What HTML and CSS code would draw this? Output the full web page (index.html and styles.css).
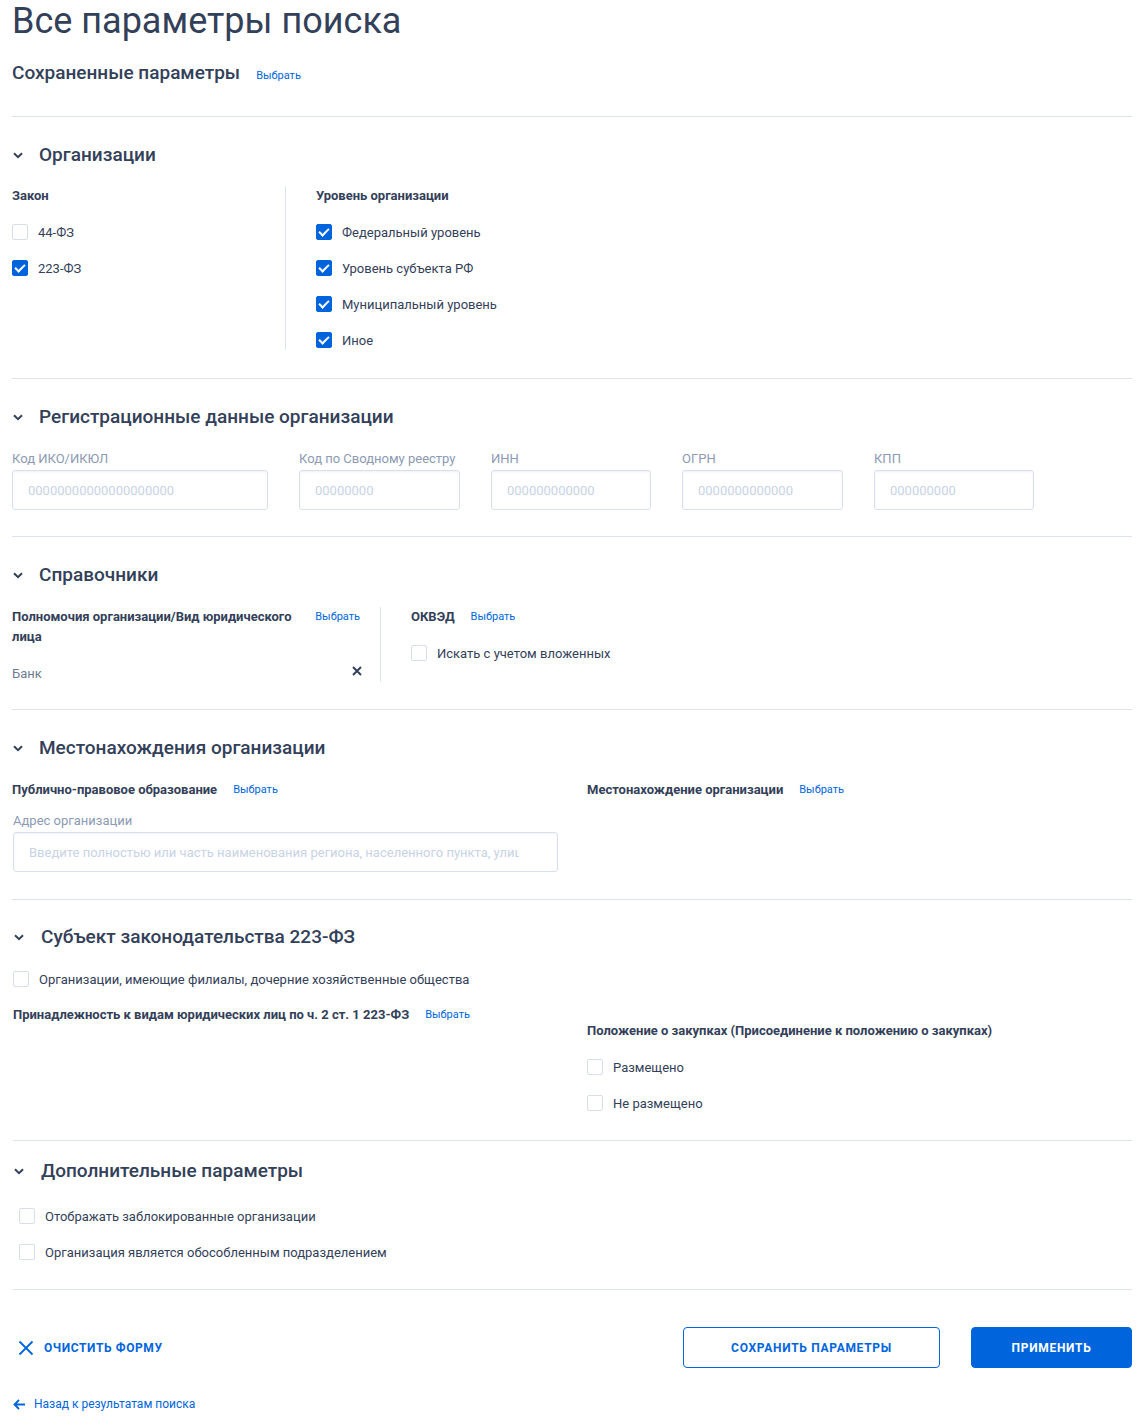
FILE: index.html
```html
<!DOCTYPE html>
<html lang="ru">
<head>
    <meta charset="UTF-8">
    <meta name="viewport" content="width=device-width, initial-scale=1.0">
    <title>Все параметры поиска</title>
    <link rel="stylesheet" href="styles.css">
</head>
<body>
<main class="page">
    <h1 class="page-title">Все параметры поиска</h1>

    <div class="saved">
        <span class="saved-title">Сохраненные параметры</span>
        <a class="link" href="#">Выбрать</a>
    </div>

    <!-- Организации -->
    <section class="block block-org">
        <h2 class="block-head">
            <svg class="chevron" width="10" height="7" viewBox="0 0 10 7"><polyline points="1,1.2 5,5.2 9,1.2"/></svg>
            Организации
        </h2>
        <div class="cols">
            <div class="col col-law">
                <div class="field-label">Закон</div>
                <label class="check"><span class="box"></span>44-ФЗ</label>
                <label class="check"><span class="box checked"></span>223-ФЗ</label>
            </div>
            <div class="col col-right">
                <div class="field-label">Уровень организации</div>
                <label class="check"><span class="box checked"></span>Федеральный уровень</label>
                <label class="check"><span class="box checked"></span>Уровень субъекта РФ</label>
                <label class="check"><span class="box checked"></span>Муниципальный уровень</label>
                <label class="check"><span class="box checked"></span>Иное</label>
            </div>
        </div>
    </section>

    <!-- Регистрационные данные -->
    <section class="block">
        <h2 class="block-head">
            <svg class="chevron" width="10" height="7" viewBox="0 0 10 7"><polyline points="1,1.2 5,5.2 9,1.2"/></svg>
            Регистрационные данные организации
        </h2>
        <div class="inputs">
            <div class="input-group w256">
                <div class="input-label">Код ИКО/ИКЮЛ</div>
                <input class="text-input" type="text" placeholder="00000000000000000000">
            </div>
            <div class="input-group w161">
                <div class="input-label">Код по Сводному реестру</div>
                <input class="text-input" type="text" placeholder="00000000">
            </div>
            <div class="input-group w160">
                <div class="input-label">ИНН</div>
                <input class="text-input" type="text" placeholder="000000000000">
            </div>
            <div class="input-group w161">
                <div class="input-label">ОГРН</div>
                <input class="text-input" type="text" placeholder="0000000000000">
            </div>
            <div class="input-group w160">
                <div class="input-label">КПП</div>
                <input class="text-input" type="text" placeholder="000000000">
            </div>
        </div>
    </section>

    <!-- Справочники -->
    <section class="block">
        <h2 class="block-head">
            <svg class="chevron" width="10" height="7" viewBox="0 0 10 7"><polyline points="1,1.2 5,5.2 9,1.2"/></svg>
            Справочники
        </h2>
        <div class="cols">
            <div class="col col-powers">
                <div class="label-row">
                    <span class="field-label grow">Полномочия организации/Вид юридического лица</span>
                    <a class="link" href="#">Выбрать</a>
                </div>
                <div class="chosen">
                    <span>Банк</span>
                    <svg class="remove" width="10" height="10" viewBox="0 0 10 10"><path d="M1 1 L9 9 M9 1 L1 9"/></svg>
                </div>
            </div>
            <div class="col col-right">
                <div class="label-row">
                    <span class="field-label">ОКВЭД</span>
                    <a class="link" href="#">Выбрать</a>
                </div>
                <label class="check"><span class="box"></span>Искать с учетом вложенных</label>
            </div>
        </div>
    </section>

    <!-- Местонахождения -->
    <section class="block">
        <h2 class="block-head">
            <svg class="chevron" width="10" height="7" viewBox="0 0 10 7"><polyline points="1,1.2 5,5.2 9,1.2"/></svg>
            Местонахождения организации
        </h2>
        <div class="halves">
            <div>
                <div class="label-row">
                    <span class="field-label">Публично-правовое образование</span>
                    <a class="link" href="#">Выбрать</a>
                </div>
                <div class="input-group address">
                    <div class="input-label">Адрес организации</div>
                    <input class="text-input" type="text" placeholder="Введите полностью или часть наименования региона, населенного пункта, улицы">
                </div>
            </div>
            <div>
                <div class="label-row">
                    <span class="field-label">Местонахождение организации</span>
                    <a class="link" href="#">Выбрать</a>
                </div>
            </div>
        </div>
    </section>

    <!-- Субъект 223-ФЗ -->
    <section class="block block-shift">
        <h2 class="block-head">
            <svg class="chevron" width="10" height="7" viewBox="0 0 10 7"><polyline points="1,1.2 5,5.2 9,1.2"/></svg>
            Субъект законодательства 223-ФЗ
        </h2>
        <label class="check check-first"><span class="box"></span>Организации, имеющие филиалы, дочерние хозяйственные общества</label>
        <div class="halves">
            <div>
                <div class="label-row">
                    <span class="field-label">Принадлежность к видам юридических лиц по ч. 2 ст. 1 223-ФЗ</span>
                    <a class="link" href="#">Выбрать</a>
                </div>
            </div>
            <div class="regulation">
                <div class="field-label">Положение о закупках (Присоединение к положению о закупках)</div>
                <label class="check"><span class="box"></span>Размещено</label>
                <label class="check"><span class="box"></span>Не размещено</label>
            </div>
        </div>
    </section>

    <!-- Дополнительные параметры -->
    <section class="block block-shift block-extra">
        <h2 class="block-head">
            <svg class="chevron" width="10" height="7" viewBox="0 0 10 7"><polyline points="1,1.2 5,5.2 9,1.2"/></svg>
            Дополнительные параметры
        </h2>
        <div class="extra-list">
            <label class="check"><span class="box"></span>Отображать заблокированные организации</label>
            <label class="check"><span class="box"></span>Организация является обособленным подразделением</label>
        </div>
    </section>

    <div class="actions">
        <button class="btn-clear" type="button">
            <svg width="16" height="16" viewBox="0 0 16 16"><path d="M1.5 1.5 L14.5 14.5 M14.5 1.5 L1.5 14.5"/></svg>
            Очистить форму
        </button>
        <div class="actions-right">
            <button class="btn btn-outline" type="button">Сохранить параметры</button>
            <button class="btn btn-primary" type="button">Применить</button>
        </div>
    </div>

    <a class="back" href="#">
        <svg width="13" height="11" viewBox="0 0 13 11"><path d="M12 5.5 H2 M6 1 L1.5 5.5 L6 10"/></svg>
        Назад к результатам поиска
    </a>
</main>
</body>
</html>
```

FILE: styles.css
```css
body {
    margin: 0;
    font-family: Roboto, "Liberation Sans", Arial, sans-serif;
    color: #334059;
    background: #fff;
}

.page {
    width: 1120px;
    padding: 0 13px 0 12px;
}

.page-title {
    margin: 0;
    font-size: 36px;
    font-weight: 400;
    line-height: 42px;
    color: #334059;
}

.saved {
    display: flex;
    align-items: baseline;
    margin-top: 19px;
    padding-bottom: 30px;
    border-bottom: 1px solid #dce3ee;
}

.saved-title {
    font-size: 19px;
    font-weight: 500;
    line-height: 24px;
}

.link {
    font-size: 11px;
    line-height: 20px;
    color: #0065dd;
    text-decoration: none;
    margin-left: 16px;
    flex: none;
}

/* sections */
.block {
    padding: 24px 0 27px;
    border-bottom: 1px solid #dce3ee;
}

.block-head {
    display: flex;
    align-items: center;
    margin: 0;
    font-size: 19px;
    font-weight: 500;
    line-height: 28px;
    color: #334059;
}

.chevron {
    margin: 1px 16px 0 1px;
}

.chevron polyline {
    fill: none;
    stroke: #334059;
    stroke-width: 2;
}

.field-label {
    font-size: 13px;
    font-weight: 700;
    line-height: 20px;
    color: #334059;
}

.cols {
    display: flex;
    margin-top: 18px;
}

.block-org {
    padding-bottom: 28px;
}

.block-org .cols {
    margin-top: 17px;
}

.col-law {
    width: 273px;
    border-right: 1px solid #dce3ee;
}

.col-right {
    padding-left: 30px;
}

.check {
    display: flex;
    align-items: center;
    height: 20px;
    margin-top: 16px;
    font-size: 13px;
    color: #334059;
}

.box {
    width: 14px;
    height: 14px;
    border: 1px solid #d6deea;
    border-radius: 2px;
    margin-right: 10px;
    flex: none;
    position: relative;
}

.box.checked {
    background: #0065dd;
    border-color: #0065dd;
}

.box.checked::after {
    content: "";
    position: absolute;
    left: 4px;
    top: 1px;
    width: 4px;
    height: 8px;
    border: solid #fff;
    border-width: 0 2px 2px 0;
    transform: rotate(45deg);
}

/* inputs */
.inputs {
    display: flex;
    gap: 31px;
    margin-top: 19px;
}

.block:has(.inputs) {
    padding-bottom: 26px;
}

.w256 {
    width: 256px;
}

.w161 {
    width: 161px;
}

.w160 {
    width: 160px;
}

.input-label {
    font-size: 13px;
    line-height: 18px;
    color: #8c9ab4;
    margin-bottom: 2px;
    white-space: nowrap;
}

.text-input {
    box-sizing: border-box;
    width: 100%;
    height: 40px;
    padding: 0 15px;
    border: 1px solid #d7e0ec;
    border-radius: 3px;
    box-shadow: inset 0 1px 2px rgba(120, 140, 180, 0.12);
    font-family: inherit;
    font-size: 13px;
    color: #334059;
}

.text-input::placeholder {
    color: #c8d3e4;
}

/* dictionaries */
.label-row {
    display: flex;
    align-items: flex-start;
}

.grow {
    flex: 1;
}

.col-powers {
    width: 351px;
    padding-right: 17px;
    border-right: 1px solid #dce3ee;
}

.col-powers .link {
    margin-left: 12px;
    margin-right: 3px;
}

.chosen {
    display: flex;
    justify-content: space-between;
    align-items: center;
    height: 18px;
    margin-top: 17px;
    font-size: 13px;
    color: #6e7b92;
}

.remove {
    margin-right: 1px;
    margin-top: -5px;
}

.remove path {
    stroke: #334059;
    stroke-width: 2;
}

/* location */
.halves {
    display: grid;
    grid-template-columns: 545px 545px;
    column-gap: 30px;
    margin-top: 18px;
}

.input-group.address {
    width: 545px;
    margin-top: 12px;
    padding-left: 1px;
}

.address .text-input {
    padding-right: 38px;
    text-overflow: clip;
}

/* subject 223 */
.block-shift {
    padding-top: 23px;
    margin-left: 1px;
}

.block-shift .chevron {
    margin-right: 17px;
}

.check-first {
    margin-top: 18px;
}

.block-shift .halves {
    margin-top: 16px;
    grid-template-columns: 544px 545px;
}

.regulation {
    padding-top: 16px;
}

.block-extra {
    padding-top: 16px;
}

.extra-list {
    padding: 5px 0 0 6px;
}

/* footer */
.actions {
    display: flex;
    justify-content: space-between;
    align-items: center;
    margin-top: 37px;
}

.btn-clear {
    display: flex;
    align-items: center;
    padding: 0 0 0 6px;
    border: none;
    background: none;
    font-family: inherit;
    font-size: 12px;
    font-weight: 700;
    text-transform: uppercase;
    letter-spacing: 0.6px;
    color: #0065dd;
    cursor: pointer;
}

.btn-clear svg {
    margin-right: 10px;
}

.btn-clear path {
    stroke: #0065dd;
    stroke-width: 1.8;
}

.actions-right {
    display: flex;
    gap: 31px;
}

.btn {
    height: 41px;
    border-radius: 4px;
    font-family: inherit;
    font-size: 12px;
    font-weight: 700;
    text-transform: uppercase;
    letter-spacing: 0.7px;
    cursor: pointer;
}

.btn-outline {
    width: 257px;
    background: #fff;
    border: 1px solid #0065dd;
    color: #0065dd;
}

.btn-primary {
    width: 161px;
    background: #0065dd;
    border: 1px solid #0065dd;
    color: #fff;
}

.back {
    display: inline-flex;
    align-items: center;
    margin: 29px 0 0 1px;
    font-size: 12px;
    color: #0065dd;
    text-decoration: none;
}

.back svg {
    margin-right: 8px;
}

.back path {
    fill: none;
    stroke: #0065dd;
    stroke-width: 1.8;
}
```
